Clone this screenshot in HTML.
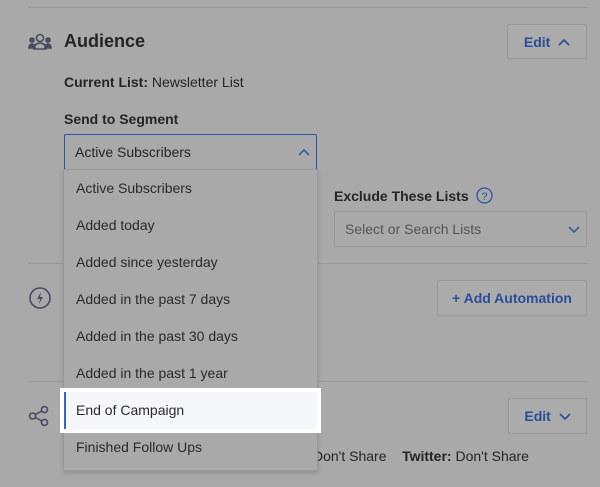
<!DOCTYPE html>
<html><head><meta charset="utf-8"><style>
*{box-sizing:border-box;margin:0;padding:0}
body{width:600px;height:487px;background:#a9a9a9;font-family:"Liberation Sans",sans-serif;color:#252525;position:relative;overflow:hidden}
.abs{position:absolute}
.line{position:absolute;left:28px;width:559px;height:1px;background:#999}
.btn{position:absolute;border:1px solid #999;border-radius:2px;background:#ababab;color:#2a4d9a;font-size:14px;display:flex;align-items:center;justify-content:center;font-weight:bold}
.t{position:absolute;font-size:14px;white-space:nowrap}
.menu{position:absolute;left:63px;top:169px;width:255px;height:302px;border:1px solid #999;background:#a9a9a9;box-shadow:0 2px 4px rgba(0,0,0,.15)}
.mi{position:absolute;left:12px;font-size:14px;color:#2a2a2a}
</style></head><body>
<div class="line" style="top:7px"></div>
<div class="line" style="top:263px"></div>
<div class="line" style="top:381px"></div>

<svg class="abs" style="left:28px;top:32px" width="24" height="20" viewBox="0 0 24 20" fill="none" stroke="#4a4a60" stroke-width="1.6">
<circle cx="12" cy="6" r="3.5"/><path d="M6 17c0-4 3-6 6-6s6 2 6 6z"/>
<circle cx="4" cy="8" r="2" fill="#4a4a60"/><path d="M1 16c0-3 1.5-4 3-4s3 1 3 4z" fill="#4a4a60"/>
<circle cx="20" cy="8" r="2" fill="#4a4a60"/><path d="M17 16c0-3 1.5-4 3-4s3 1 3 4z" fill="#4a4a60"/>
</svg>
<div class="t" style="left:64px;top:31px;font-size:18px;font-weight:bold">Audience</div>
<div class="btn" style="left:507px;top:24px;width:80px;height:35px">Edit&nbsp;&nbsp;<svg width="12" height="8" viewBox="0 0 12 8"><path d="M1 7l5-5 5 5" stroke="#2a4d9a" stroke-width="1.6" fill="none"/></svg></div>
<div class="t" style="left:64px;top:74px"><b>Current List:</b> Newsletter List</div>
<div class="t" style="left:64px;top:111px;font-weight:bold">Send to Segment</div>
<div class="abs" style="left:64px;top:134px;width:253px;height:36px;border:1px solid #2a55a8;border-radius:2px"></div>
<div class="t" style="left:75px;top:144px">Active Subscribers</div>
<svg class="abs" style="left:298px;top:148px" width="12" height="8" viewBox="0 0 12 8"><path d="M1 7l5-5 5 5" stroke="#2a4d9a" stroke-width="1.4" fill="none"/></svg>

<div class="t" style="left:334px;top:188px;font-weight:bold">Exclude These Lists</div>
<svg class="abs" style="left:476px;top:187px" width="17" height="17" viewBox="0 0 17 17"><circle cx="8.5" cy="8.5" r="7.5" stroke="#2a55a8" stroke-width="1.3" fill="none"/><text x="8.5" y="13" text-anchor="middle" font-size="11" fill="#2a55a8" font-family="Liberation Sans">?</text></svg>
<div class="abs" style="left:334px;top:211px;width:253px;height:36px;border:1px solid #999;border-radius:2px"></div>
<div class="t" style="left:345px;top:221px;color:#555">Select or Search Lists</div>
<svg class="abs" style="left:568px;top:225px" width="12" height="8" viewBox="0 0 12 8"><path d="M1 2l5 5 5-5" stroke="#2a4d9a" stroke-width="1.4" fill="none"/></svg>

<svg class="abs" style="left:28px;top:286px" width="24" height="24" viewBox="0 0 24 24"><circle cx="12" cy="12" r="10" stroke="#4a4a60" stroke-width="1.6" fill="none"/><path d="M13 6l-4 7h3l-1 5 4-7h-3z" fill="#4a4a60"/></svg>
<div class="btn" style="left:437px;top:280px;width:150px;height:36px">+ Add Automation</div>

<svg class="abs" style="left:28px;top:405px" width="22" height="22" viewBox="0 0 24 24" fill="none" stroke="#4a4a60" stroke-width="1.7"><circle cx="5" cy="12" r="3.3"/><circle cx="18" cy="5" r="3.3"/><circle cx="18" cy="19" r="3.3"/><path d="M8 10.5l7-4M8 13.5l7 4"/></svg>
<div class="btn" style="left:508px;top:398px;width:79px;height:36px">Edit&nbsp;&nbsp;<svg width="12" height="8" viewBox="0 0 12 8"><path d="M1 2l5 5 5-5" stroke="#2a4d9a" stroke-width="1.6" fill="none"/></svg></div>
<div class="t" style="left:313px;top:448px">Don't Share&nbsp;&nbsp;&nbsp;&nbsp;<b>Twitter:</b> Don't Share</div>

<div class="menu">
<div class="mi" style="top:10px">Active Subscribers</div>
<div class="mi" style="top:47px">Added today</div>
<div class="mi" style="top:84px">Added since yesterday</div>
<div class="mi" style="top:121px">Added in the past 7 days</div>
<div class="mi" style="top:158px">Added in the past 30 days</div>
<div class="mi" style="top:195px">Added in the past 1 year</div>
<div class="mi" style="top:269px">Finished Follow Ups</div>
</div>
<div class="abs" style="left:60px;top:388px;width:261px;height:45px;background:#fff"></div>
<div class="abs" style="left:64px;top:392px;width:253px;height:37px;background:#f6f7fb;border-left:2px solid #2f64d6"></div>
<div class="t" style="left:76px;top:402px;color:#2a2a2a">End of Campaign</div>
</body></html>
